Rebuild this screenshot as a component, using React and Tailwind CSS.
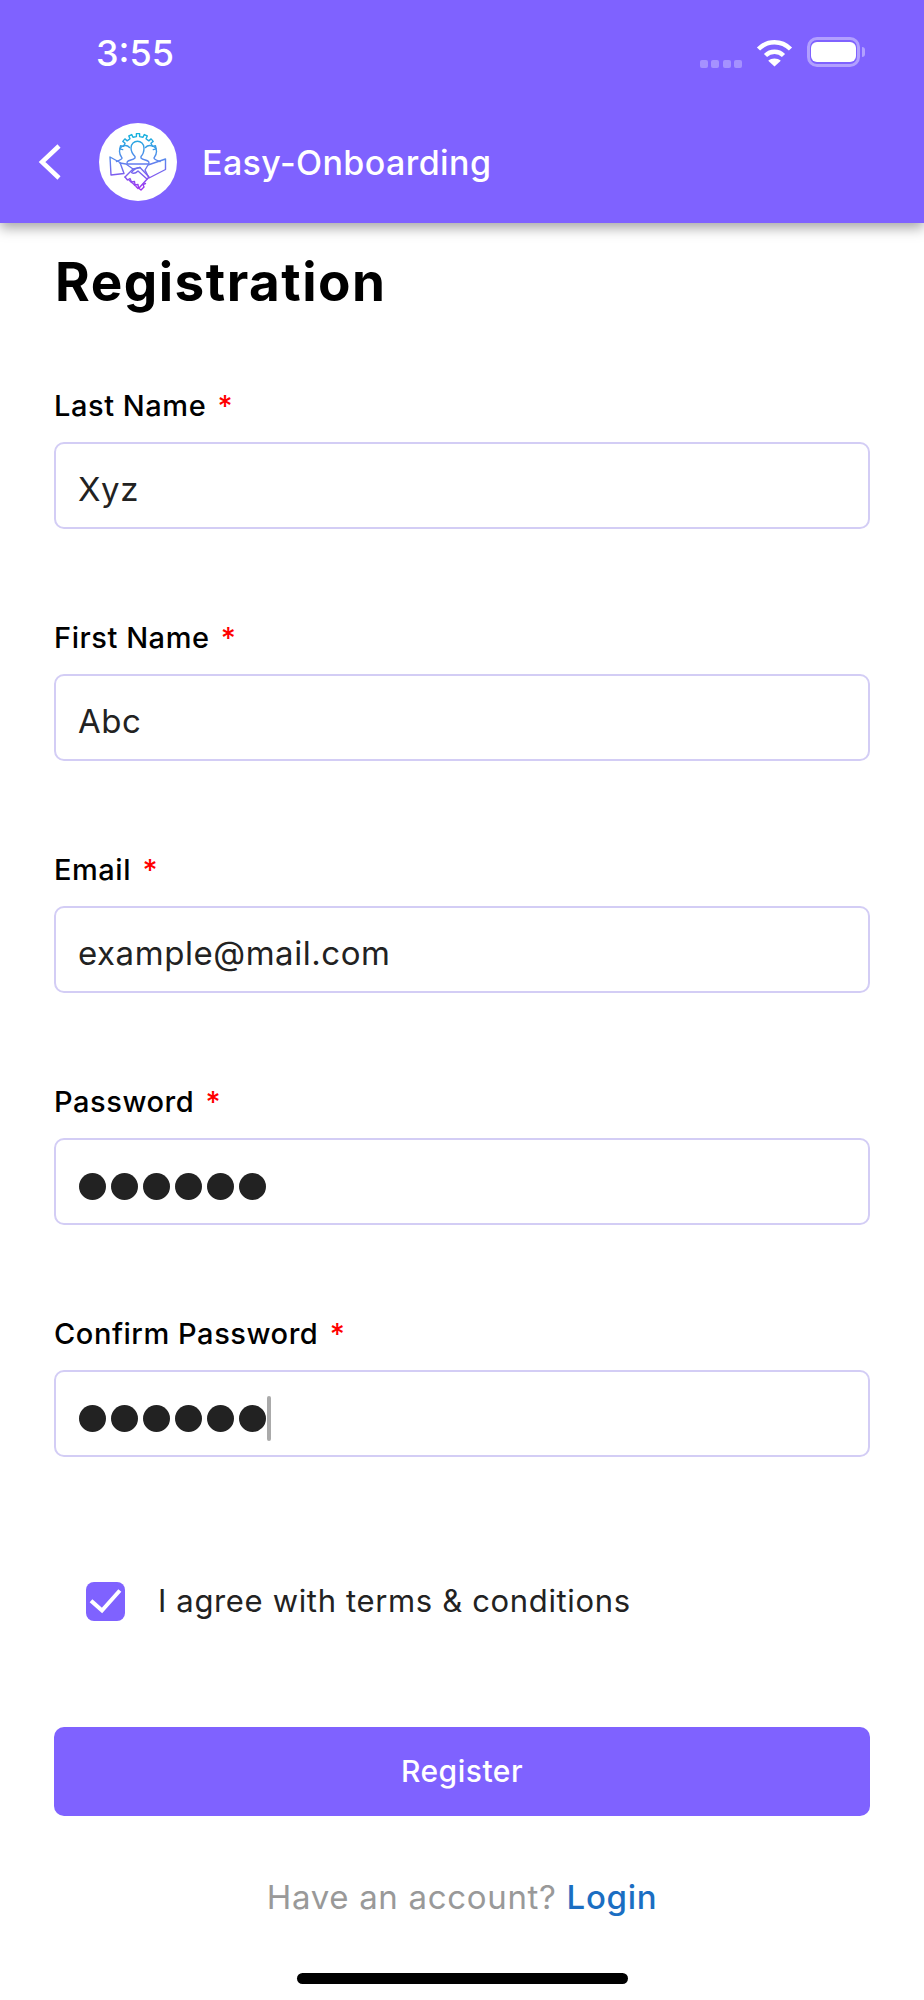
const fields = [
  { label: "Last Name", value: "Xyz" },
  { label: "First Name", value: "Abc" },
  { label: "Email", value: "example@mail.com" },
  { label: "Password", dots: 6 },
  { label: "Confirm Password", dots: 6, caret: true },
];

// gear outline for the logo, only the part above the people
function gearPath() {
  const cx = 39;
  const cy = 29;
  let d = "";
  for (let i = 0; i < 7; i++) {
    const a = -165 + i * 25;
    const pts = [
      [15.5, a - 6],
      [18.5, a - 5],
      [18.5, a + 5],
      [15.5, a + 6],
    ];
    pts.forEach(([r, deg], j) => {
      const x = (cx + r * Math.cos((deg * Math.PI) / 180)).toFixed(1);
      const y = (cy + r * Math.sin((deg * Math.PI) / 180)).toFixed(1);
      d += `${i === 0 && j === 0 ? "M" : "L"}${x} ${y}`;
    });
  }
  return d;
}

function Logo() {
  return (
    <div className="flex h-[78px] w-[78px] shrink-0 items-center justify-center rounded-full bg-white">
      <svg width="78" height="78" viewBox="0 0 78 78" fill="none" stroke="url(#logoGrad)" strokeWidth="1.4" strokeLinejoin="round" strokeLinecap="round">
        <defs>
          <linearGradient id="logoGrad" gradientUnits="userSpaceOnUse" x1="39" y1="10" x2="39" y2="68">
            <stop offset="0" stopColor="#12b5dc" />
            <stop offset="0.5" stopColor="#5f83ee" />
            <stop offset="1" stopColor="#a32cf0" />
          </linearGradient>
        </defs>
        <path d={gearPath()} />
        {/* people */}
        <path d="M32 25c0-9 13-9 13 0 0 4-1.500 7-3 8.500v1.500c2 2 6 2 7.500 3.500.5.5.5 1.500.5 2.500H28c0-1 0-2 .5-2.500 1.500-1.500 5.500-1.500 7.500-3.500v-1.500c-1.500-1.500-4-4.500-4-8.500z" />
        <path d="M30.500 24.500c-3-3.500-10-2-10 4 0 3 1.500 5 2.500 6.500 0 1.500-3 2.500-5.500 3.500" />
        <path d="M46.500 24.500c3-3.500 11-2 11 4 0 3-1.500 5-2.500 6.500 0 1.500 3 2.500 6 3.500" />
        {/* cuffs */}
        <path d="M11 34l10 5.500 4 11-13 1.500z" />
        <path d="M66.500 36v10.500l-16.500 8.500-4-8 3-5z" />
        {/* handshake */}
        <path d="M21 40l6 1 7 5-8 8" />
        <path d="M34 46l7-1.500 9 9.500-9.500 10.500" />
        <path d="M41 44.500c-4 .5-7 2.500-8.500 5 2 1.500 4.500 .5 6.500-1.500l9 8" />
        <path d="M26 54l2.500 3 2.500-1.500 1.500 3.500 3-.5 .5 3.500 3-.5 .5 3.500 2.500 2 3-3-1-2.500 2.500-1" />
        <path d="M30 57l2.500 2.500M33.500 60l2.500 2.500M37 63.500l2 2" />
      </svg>
    </div>
  );
}

function StatusIcons() {
  return (
    <div className="flex items-center">
      <div className="mr-[14px] mt-[24px] flex gap-[3.5px]">
        {[0, 1, 2, 3].map((i) => (
          <span key={i} className="h-[8px] w-[8px] rounded-[2px] bg-white/30" />
        ))}
      </div>
      <svg width="37" height="29" viewBox="0 0 37 29" className="mr-[14px]" fill="none" stroke="white" strokeWidth="4.500">
        <path d="M2.500 11C11.500 2 25.500 2 34.500 11" />
        <path d="M9.500 17.500c5-5 13-5 18 0" />
        <path d="M18.500 28.500l-6.300-5.800c3.500-2.800 9-2.800 12.600 0z" fill="white" stroke="none" />
      </svg>
      <div className="flex h-[30px] w-[53px] items-center justify-center rounded-[10px] border-[3px] border-white/40">
        <div className="h-[20px] w-[45px] rounded-[6px] bg-white" />
      </div>
      <div className="ml-[2px] h-[10px] w-[3px] rounded-r-full bg-white/40" />
    </div>
  );
}

function Field({ label, value, dots, caret }) {
  return (
    <div className="mb-[92px]">
      <div className="mb-[19px] h-[34px] text-[29px] font-[450] leading-[34px] tracking-[0.55px] text-black">
        {label} <span className="ml-[3px] text-[#f00]">*</span>
      </div>
      <div className="flex h-[87px] items-center rounded-[10px] border-2 border-[#d3cdf5] bg-white pl-[22px] pr-[23px] pt-[9px]">
        {value && <span className="text-[33px] tracking-[0.55px] text-[#222]">{value}</span>}
        {dots && (
          <div className="ml-[1px] flex items-center gap-[5px]">
            {Array.from({ length: dots }, (_, i) => (
              <span key={i} className="h-[27px] w-[27px] rounded-full bg-[#222]" />
            ))}
          </div>
        )}
        {caret && <span className="ml-[1px] h-[45px] w-[4px] rounded-full bg-[#aaa]" />}
      </div>
    </div>
  );
}

export default function App() {
  return (
    <div className="flex h-[2000px] w-[924px] flex-col bg-white font-['Inter',sans-serif]">
      <header className="relative z-10 h-[223px] bg-[#7f62ff] shadow-[0_5px_12px_rgba(0,0,0,0.35)]">
        <div className="flex h-[123px] items-start justify-between pl-[96px] pr-[59px] pt-[31px]">
          <span className="text-[36px] font-medium leading-[44px] text-white">3:55</span>
          <div className="pt-[5px]">
            <StatusIcons />
          </div>
        </div>
        <div className="flex items-center pl-[38px]">
          <svg width="24" height="38" viewBox="0 0 24 38" fill="none" stroke="white" strokeWidth="4.500" className="mr-[37px]">
            <path d="M21 3L4 19l17 16" />
          </svg>
          <Logo />
          <span className="ml-[25px] text-[34px] font-medium tracking-[0.4px] text-white">Easy-Onboarding</span>
        </div>
      </header>

      <main className="flex flex-1 flex-col px-[54px]">
        <h1 className="ml-[1px] mt-[27px] mb-[75px] text-[53px] font-bold leading-[64px] tracking-[1.5px] text-black">Registration</h1>
        {fields.map((f) => (
          <Field key={f.label} {...f} />
        ))}

        <div className="mt-[29px] flex items-center pl-[32px]">
          <span className="flex h-[39px] w-[39px] items-center justify-center rounded-[8px] bg-[#7f62ff]">
            <svg width="39" height="39" viewBox="0 0 39 39" fill="none" stroke="white" strokeWidth="4" strokeLinecap="square">
              <path d="M6.500 20l9.500 8.500L32.500 10" />
            </svg>
          </span>
          <span className="ml-[33px] text-[31px] tracking-[0.65px] text-[#222]">I agree with terms &amp; conditions</span>
        </div>

        <button className="mt-[102px] h-[89px] w-full rounded-[10px] bg-[#7f62ff] text-[30px] font-medium tracking-[0.5px] text-white">
          Register
        </button>

        <p className="mt-[61px] text-center text-[33px] leading-[40px] tracking-[0.68px] text-[#999]">
          Have an account? <span className="font-medium text-[#1b6ec2]">Login</span>
        </p>

        <div className="mx-auto mt-[56px] h-[11px] w-[331px] rounded-full bg-black" />
      </main>
    </div>
  );
}
